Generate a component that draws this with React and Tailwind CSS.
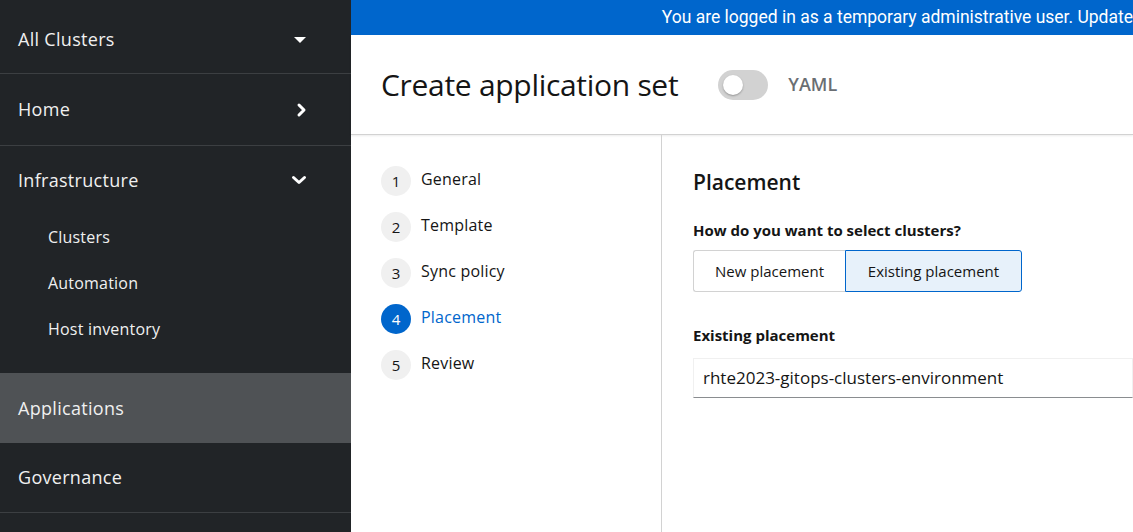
import React from 'react';

const font = { fontFamily: '"Open Sans", "Liberation Sans", sans-serif' };

const CaretDown = () => (
  <svg width="14" height="12" viewBox="0 0 14 12" fill="currentColor">
    <path d="M1 3h12L7 9z" />
  </svg>
);

const ChevronRight = () => (
  <svg width="12" height="16" viewBox="0 0 12 16" fill="none" stroke="currentColor" strokeWidth="3" strokeLinecap="round" strokeLinejoin="round">
    <path d="M4 3l5 5-5 5" />
  </svg>
);

const ChevronDown = () => (
  <svg width="16" height="12" viewBox="0 0 16 12" fill="none" stroke="currentColor" strokeWidth="3" strokeLinecap="round" strokeLinejoin="round">
    <path d="M2.5 3.5l5.5 5 5.5-5" />
  </svg>
);

const NavRow = ({ label, icon, active, border = true, className = '' }) => (
  <div className={`flex items-center justify-between pl-[18px] pr-[44px] ${active ? 'bg-[#4f5255]' : ''} ${border ? 'border-b border-[#3c3f42]' : ''} ${className}`}>
    <span className="text-[18px] tracking-[0.3px] text-[#f0f0f0]">{label}</span>
    {icon && <span className="text-white flex items-center">{icon}</span>}
  </div>
);

const steps = ['General', 'Template', 'Sync policy', 'Placement', 'Review'];

export default function App() {
  return (
    <div className="flex w-[1133px] h-[532px] overflow-hidden bg-white" style={font}>
      {/* Sidebar */}
      <aside className="w-[351px] shrink-0 bg-[#212427] flex flex-col">
        <NavRow label="All Clusters" icon={<CaretDown />} className="h-[74px] pt-[6px]" />
        <NavRow label="Home" icon={<ChevronRight />} className="h-[72px]" />
        <div>
          <NavRow label="Infrastructure" icon={<ChevronDown />} border={false} className="h-[68px]" />
          <div className="flex flex-col pb-[21px]">
            {['Clusters', 'Automation', 'Host inventory'].map(s => (
              <div key={s} className="h-[46px] flex items-center pl-[48px] text-[16px] tracking-[0.2px] text-[#f0f0f0]">{s}</div>
            ))}
          </div>
        </div>
        <NavRow label="Applications" active border={false} className="h-[70px]" />
        <NavRow label="Governance" className="h-[70px]" />
      </aside>

      {/* Main */}
      <main className="flex-1 min-w-0 flex flex-col">
        <div className="h-[35px] bg-[#0066cc] flex items-center justify-end overflow-hidden whitespace-nowrap text-white text-[17.5px]" style={{ fontFamily: '"Roboto", "Liberation Sans", sans-serif' }}>
          You are logged in as a temporary administrative user. Update
        </div>

        <div className="h-[100px] flex items-center pl-[30px] border-b border-[#d2d2d2] shadow-[0_1px_2px_rgba(0,0,0,0.08)]">
          <h1 className="text-[30px] text-[#151515] tracking-[-0.3px]">Create application set</h1>
          <div className="ml-[40px] w-[50px] h-[30px] rounded-full bg-[#d2d2d2] flex items-center pl-[5px]">
            <div className="w-[20px] h-[20px] rounded-full bg-white shadow-[0_1px_2px_rgba(0,0,0,0.3)]" />
          </div>
          <span className="ml-[20px] text-[18px] font-semibold text-[#6a6e73]">YAML</span>
        </div>

        <div className="flex flex-1">
          {/* Wizard nav */}
          <nav className="w-[311px] shrink-0 border-r border-[#d2d2d2] pt-[31px] pl-[30px] flex flex-col gap-[16px]">
            {steps.map((s, i) => {
              const active = i === 3;
              return (
                <div key={s} className="flex items-center gap-[10px] h-[30px]">
                  <span className={`w-[30px] h-[30px] rounded-full flex items-center justify-center text-[15px] ${active ? 'bg-[#0066cc] text-white' : 'bg-[#f0f0f0] text-[#151515]'}`}>{i + 1}</span>
                  <span className={`text-[16px] tracking-[0.2px] -mt-[4px] ${active ? 'text-[#0066cc]' : 'text-[#151515]'}`}>{s}</span>
                </div>
              );
            })}
          </nav>

          {/* Content */}
          <section className="flex-1 pl-[31px] pt-[32px]">
            <h2 className="text-[21px] font-semibold text-[#151515] leading-[30px]">Placement</h2>
            <p className="mt-[23px] text-[15px] font-bold text-[#151515] leading-[20px]">How do you want to select clusters?</p>
            <div className="mt-[10px] flex">
              <button className="w-[152px] h-[42px] border border-[#d2d2d2] border-r-0 rounded-l-[3px] text-[15px] text-[#151515]">New placement</button>
              <button className="w-[177px] h-[42px] border border-[#0066cc] bg-[#e7f1fa] rounded-r-[3px] text-[15px] text-[#151515]">Existing placement</button>
            </div>
            <p className="mt-[33px] text-[15px] font-bold text-[#151515] leading-[20px]">Existing placement</p>
            <div className="mt-[13px] h-[40px] border border-[#f0f0f0] border-b-[#8a8d90] flex items-center pl-[9px] text-[17px] text-[#151515] whitespace-nowrap">
              rhte2023-gitops-clusters-environment
            </div>
          </section>
        </div>
      </main>
    </div>
  );
}
